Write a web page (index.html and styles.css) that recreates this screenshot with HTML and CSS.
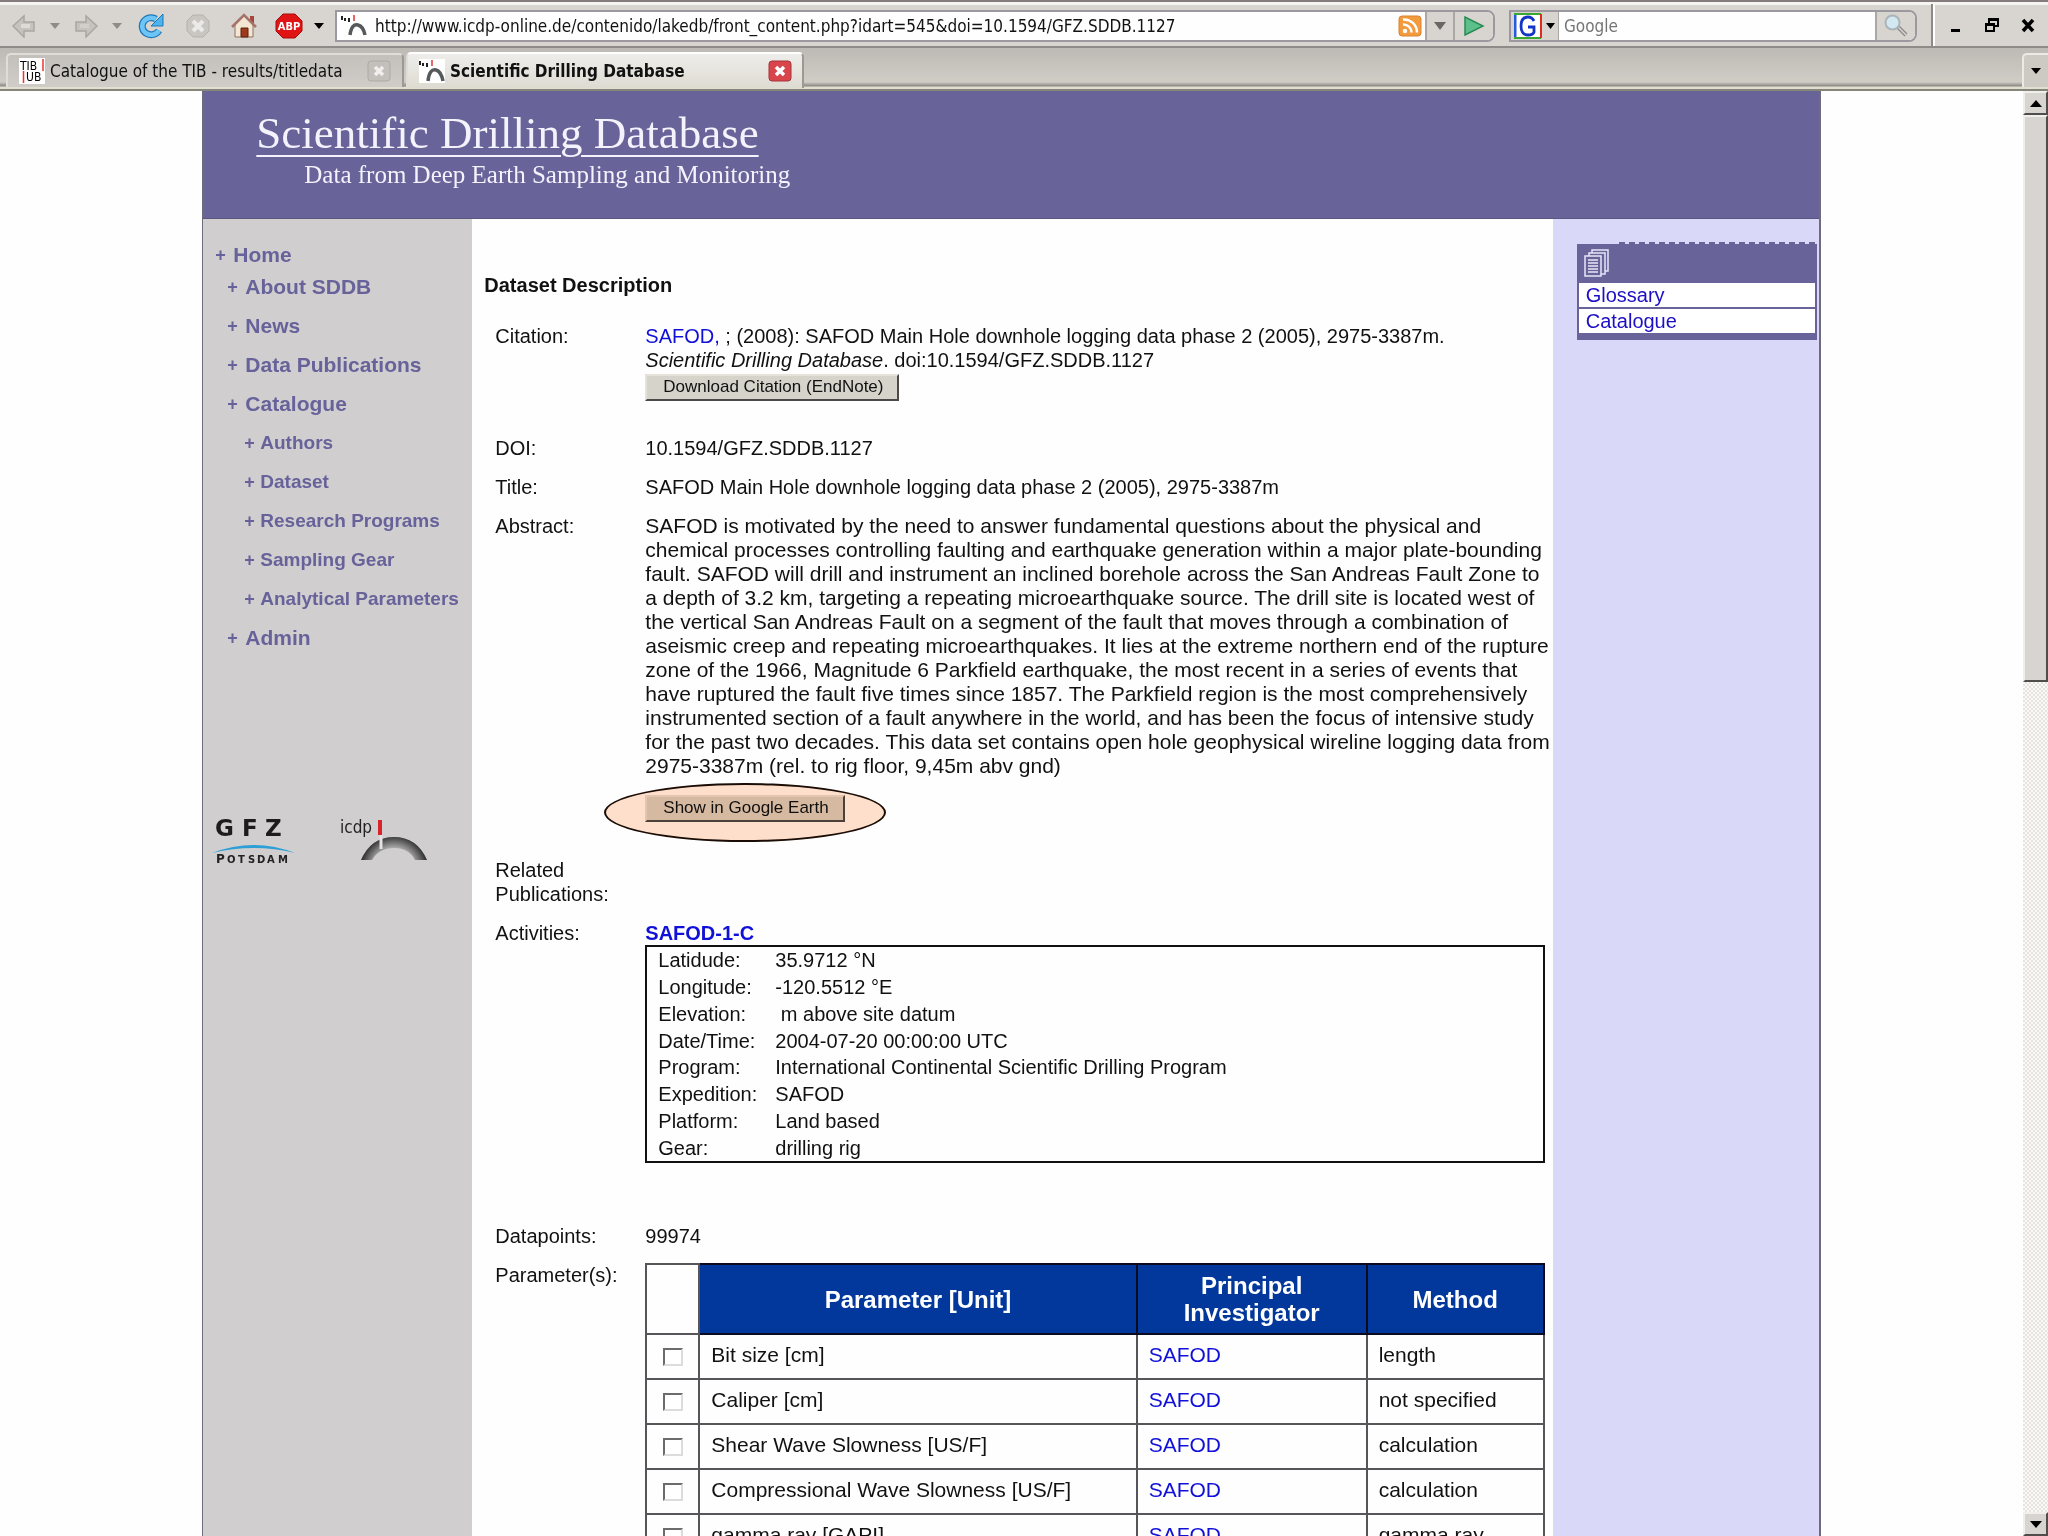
FILE: index.html
```html
<!DOCTYPE html>
<html lang="en">
<head>
<meta charset="utf-8">
<title>Scientific Drilling Database</title>
<link rel="stylesheet" href="styles.css">
</head>
<body>
<header class="toolbar">
  <div class="nav-buttons">
    <button class="icon-btn" aria-label="Back"><svg width="24" height="24" viewBox="0 0 24 24"><path d="M1 12 12 2v6h10v9H12v6z" fill="#c6c3be" stroke="#a9a6a1" stroke-width="1.5"/><path d="M9 12h9" stroke="#dedbd7" stroke-width="4"/></svg></button>
    <button class="caret-btn" aria-label="Back history"><svg width="10" height="6"><path d="M0 0h10L5 6z" fill="#8f8c88"/></svg></button>
    <button class="icon-btn" aria-label="Forward"><svg width="24" height="24" viewBox="0 0 24 24"><path d="M23 12 12 2v6H2v9h10v6z" fill="#c6c3be" stroke="#a9a6a1" stroke-width="1.5"/><path d="M6 12h9" stroke="#d2cfca" stroke-width="4"/></svg></button>
    <button class="caret-btn" aria-label="Forward history"><svg width="10" height="6"><path d="M0 0h10L5 6z" fill="#8f8c88"/></svg></button>
    <button class="icon-btn reload" aria-label="Reload"><svg width="28" height="26" viewBox="0 0 28 26"><path d="M22 17.500A9 8.500 0 1 1 19 6" fill="none" stroke="#1f78b8" stroke-width="7"/><path d="M26 1v12H14z" fill="#4db4ee" stroke="#1f78b8"/><path d="M22 17.500A9 8.500 0 1 1 19 6" fill="none" stroke="#6cc5f5" stroke-width="4.500"/></svg></button>
    <button class="icon-btn stop" aria-label="Stop"><svg width="26" height="26" viewBox="0 0 26 26"><path d="M8 2h10l6 6v10l-6 6H8l-6-6V8z" fill="#c9c6c2" stroke="#b5b2ae"/><path d="m8 8 10 10M18 8 8 18" stroke="#eceae8" stroke-width="4"/></svg></button>
    <button class="icon-btn home" aria-label="Home"><svg width="26" height="26" viewBox="0 0 26 26"><path d="M19 3h4v8h-4z" fill="#a7453f"/><path d="M4 12v12h18V12l-9-9z" fill="#f3e6d3" stroke="#8a7260"/><path d="m1 14 12-12 12 12" fill="none" stroke="#a5736a" stroke-width="2.500"/><path d="M10 15h7v9h-7z" fill="#a03a1c" stroke="#5c2312"/></svg></button>
    <button class="icon-btn abp" aria-label="Adblock Plus"><svg width="28" height="26" viewBox="0 0 28 26"><path d="M8 1h12l7 7v10l-7 7H8l-7-7V8z" fill="#e01414" stroke="#a50d0d"/><text x="14" y="17" text-anchor="middle" class="abp-text">ABP</text></svg></button>
    <button class="caret-btn" aria-label="Adblock menu"><svg width="10" height="6"><path d="M0 0h10L5 6z" fill="#000"/></svg></button>
  </div>
  <form class="address">
    <svg class="favicon" width="26" height="24" viewBox="0 0 26 24"><path d="M1 2v4M4 4v3M8 4v4" stroke="#222" stroke-width="2"/><path d="M13 1v6" stroke="#d33" stroke-width="1.500"/><path d="M9 21c1-8 4-11 8-10s6 5 7 10" fill="none" stroke="#55595a" stroke-width="3.500"/></svg>
    <input class="url" type="text" aria-label="Address" value="http://www.icdp-online.de/contenido/lakedb/front_content.php?idart=545&amp;doi=10.1594/GFZ.SDDB.1127">
    <svg class="rss" width="24" height="22" viewBox="0 0 24 22"><rect x="1" y="1" width="22" height="20" rx="3" fill="#f39a3c" stroke="#d98432"/><circle cx="7" cy="16" r="2.200" fill="#fff"/><path d="M5 9.500a8 8 0 0 1 8.500 8M5 4.500a13 13 0 0 1 14 13" fill="none" stroke="#fff" stroke-width="2.500"/></svg>
    <button type="button" class="addr-drop" aria-label="Address history"><svg width="12" height="8"><path d="M0 0h12L6 8z" fill="#6a6764"/></svg></button>
    <button type="button" class="go" aria-label="Go"><svg width="22" height="20" viewBox="0 0 22 20"><path d="M2 1v18L20 10z" fill="#5cc08a" stroke="#2b8a55" stroke-width="1.500"/></svg></button>
  </form>
  <form class="search">
    <button type="button" class="engine" aria-label="Search engine"><svg width="28" height="26" viewBox="0 0 28 26"><rect x="1" y="1" width="26" height="24" fill="#fff"/><path d="M1 25V1" stroke="#2a5ae0" stroke-width="3"/><path d="M0 1h27M0 25h27" stroke="#3aa830" stroke-width="2"/><path d="M27 1v24" stroke="#e02a1a" stroke-width="2"/><path d="M20 8q-2-4-6-4-7 0-7 9t7 9q5 0 6-3v-5h-6" fill="none" stroke="#1434c8" stroke-width="2.800"/></svg><svg width="9" height="6"><path d="M0 0h9L4.500 6z"/></svg></button>
    <input class="query" type="text" aria-label="Search" placeholder="Google">
    <button type="button" class="find" aria-label="Search"><svg width="26" height="24" viewBox="0 0 26 24"><path d="m15 13 8 8" stroke="#8d8a87" stroke-width="4"/><path d="m15 13 8 8" stroke="#d8d8d8" stroke-width="1.500"/><circle cx="9.500" cy="8.500" r="7" fill="#d3e9f2" stroke="#a9b4ba" stroke-width="2"/></svg></button>
  </form>
  <div class="window-controls">
    <button aria-label="Minimize"><svg width="16" height="16"><path d="M3 12h9v3H3z"/></svg></button>
    <button aria-label="Restore"><svg width="16" height="16"><path d="M5 6V2h9v7h-3M5 3h9" fill="none" stroke="#000" stroke-width="2"/><path d="M2 7h8v7H2zM2 8h8" fill="none" stroke="#000" stroke-width="2"/></svg></button>
    <button aria-label="Close"><svg width="16" height="16"><path d="m3 3 10 11M13 3 3 14" stroke="#000" stroke-width="3.500"/></svg></button>
  </div>
</header>
<nav class="tabs" aria-label="Tabs">
  <div class="tab">
    <svg width="26" height="26" viewBox="0 0 26 26"><rect width="26" height="26" fill="#fff"/><text x="1" y="12" class="tib-text">TIB</text><text x="7" y="23" class="tib-text">UB</text><path d="M24 1v12M4.500 13v12" stroke="#e33" stroke-width="1.500"/></svg>
    <span class="tab-title">Catalogue of the TIB - results/titledata</span>
    <button class="tab-close" aria-label="Close tab"><svg width="24" height="22" viewBox="0 0 24 22"><rect x="1" y="1" width="22" height="20" rx="3" fill="#c3c0bc" stroke="#adaaa6"/><path d="m8 7 8 8M16 7l-8 8" stroke="#f0efed" stroke-width="3.500"/></svg></button>
  </div>
  <div class="tab active">
    <svg width="26" height="24" viewBox="0 0 26 24"><rect width="26" height="24" fill="#fff"/><path d="M1 2v4M4 4v3M8 4v4" stroke="#222" stroke-width="2"/><path d="M13 1v6" stroke="#d33" stroke-width="1.500"/><path d="M9 22c1-9 4-12 8-11s6 6 7 11" fill="none" stroke="#55595a" stroke-width="3.500"/></svg>
    <span class="tab-title">Scientific Drilling Database</span>
    <button class="tab-close" aria-label="Close tab"><svg width="24" height="22" viewBox="0 0 24 22"><rect x="1" y="1" width="22" height="20" rx="3" fill="#d8464c" stroke="#a63338"/><path d="m8 7 8 8M16 7l-8 8" stroke="#fff" stroke-width="3.500"/></svg></button>
  </div>
  <button class="all-tabs" aria-label="List all tabs"><svg width="10" height="6"><path d="M0 0h10L5 6z"/></svg></button>
</nav>
<div class="viewport">
  <div class="canvas">
    <div class="page">
      <div class="banner">
        <h1>Scientific Drilling Database</h1>
        <p>Data from Deep Earth Sampling and Monitoring</p>
      </div>
      <div class="columns">
        <aside class="sidebar">
          <ul class="menu">
            <li class="top"><a href="#"><i>+</i>Home</a></li>
            <li class="main"><a href="#"><i>+</i>About SDDB</a></li>
            <li class="main"><a href="#"><i>+</i>News</a></li>
            <li class="main"><a href="#"><i>+</i>Data Publications</a></li>
            <li class="main"><a href="#"><i>+</i>Catalogue</a></li>
            <li class="sub"><a href="#"><i>+</i>Authors</a></li>
            <li class="sub"><a href="#"><i>+</i>Dataset</a></li>
            <li class="sub"><a href="#"><i>+</i>Research Programs</a></li>
            <li class="sub"><a href="#"><i>+</i>Sampling Gear</a></li>
            <li class="sub"><a href="#"><i>+</i>Analytical Parameters</a></li>
            <li class="main"><a href="#"><i>+</i>Admin</a></li>
          </ul>
          <div class="logos">
            <svg width="84" height="50" viewBox="0 0 84 50"><text x="3 30 53" y="19" class="gfz-text">GFZ</text><path d="M0 36Q42 20 83 36Q42 26 0 36z" fill="#2c9fd6"/><text y="46" class="potsdam-text"><tspan x="4">P</tspan><tspan class="small-caps" x="15 26 36 45 55 66">OTSDAM</tspan></text></svg>
            <svg width="90" height="50" viewBox="0 0 90 50"><defs><radialGradient id="arch" gradientUnits="userSpaceOnUse" cx="55" cy="52" r="35"><stop offset=".5" stop-color="#d0cece"/><stop offset=".75" stop-color="#777"/><stop offset="1" stop-color="#222"/></radialGradient></defs><text x="1" y="16" class="icdp-text">icdp</text><path d="M22 43Q32 20 55 20T88 43H76Q70 31 55 31T33 43z" fill="url(#arch)"/><path d="M42 18v14" stroke="#e4e2e2" stroke-width="3"/><path d="M41 3v15" stroke="#d8232a" stroke-width="4"/></svg>
          </div>
        </aside>
        <main class="content">
          <h2>Dataset Description</h2>
          <dl class="fields">
            <dt>Citation:</dt>
            <dd class="citation"><p><a href="#">SAFOD,</a> ; (2008): SAFOD Main Hole downhole logging data phase 2 (2005), 2975-3387m. <em>Scientific Drilling Database</em>. doi:10.1594/GFZ.SDDB.1127</p><button class="push">Download Citation (EndNote)</button></dd>
            <dt>DOI:</dt>
            <dd>10.1594/GFZ.SDDB.1127</dd>
            <dt>Title:</dt>
            <dd>SAFOD Main Hole downhole logging data phase 2 (2005), 2975-3387m</dd>
            <dt>Abstract:</dt>
            <dd class="abstract"><p>SAFOD is motivated by the need to answer fundamental questions about the physical and<br>
              chemical processes controlling faulting and earthquake generation within a major plate-bounding<br>
              fault. SAFOD will drill and instrument an inclined borehole across the San Andreas Fault Zone to<br>
              a depth of 3.2 km, targeting a repeating microearthquake source. The drill site is located west of<br>
              the vertical San Andreas Fault on a segment of the fault that moves through a combination of<br>
              aseismic creep and repeating microearthquakes. It lies at the extreme northern end of the rupture<br>
              zone of the 1966, Magnitude 6 Parkfield earthquake, the most recent in a series of events that<br>
              have ruptured the fault five times since 1857. The Parkfield region is the most comprehensively<br>
              instrumented section of a fault anywhere in the world, and has been the focus of intensive study<br>
              for the past two decades. This data set contains open hole geophysical wireline logging data from<br>
              2975-3387m (rel. to rig floor, 9,45m abv gnd)</p><div class="earth"><button class="push">Show in Google Earth</button><span class="highlight"></span></div></dd>
            <dt>Related Publications:</dt>
            <dd></dd>
            <dt>Activities:</dt>
            <dd class="activity"><a class="activity-name" href="#">SAFOD-1-C</a>
              <table class="details">
                <tr><th>Latidude:</th><td>35.9712 °N</td></tr>
                <tr><th>Longitude:</th><td>-120.5512 °E</td></tr>
                <tr><th>Elevation:</th><td>&nbsp;m above site datum</td></tr>
                <tr><th>Date/Time:</th><td>2004-07-20 00:00:00 UTC</td></tr>
                <tr><th>Program:</th><td>International Continental Scientific Drilling Program</td></tr>
                <tr><th>Expedition:</th><td>SAFOD</td></tr>
                <tr><th>Platform:</th><td>Land based</td></tr>
                <tr><th>Gear:</th><td>drilling rig</td></tr>
              </table></dd>
            <dt>Datapoints:</dt>
            <dd>99974</dd>
            <dt>Parameter(s):</dt>
            <dd>
              <table class="params">
                <thead><tr><td class="pick"></td><th>Parameter [Unit]</th><th class="pi">Principal Investigator</th><th class="method">Method</th></tr></thead>
                <tbody>
                <tr><td class="pick"><input type="checkbox" id="p1"></td><td><label for="p1">Bit size [cm]</label></td><td><a href="#">SAFOD</a></td><td>length</td></tr>
                <tr><td class="pick"><input type="checkbox" id="p2"></td><td><label for="p2">Caliper [cm]</label></td><td><a href="#">SAFOD</a></td><td>not specified</td></tr>
                <tr><td class="pick"><input type="checkbox" id="p3"></td><td><label for="p3">Shear Wave Slowness [US/F]</label></td><td><a href="#">SAFOD</a></td><td>calculation</td></tr>
                <tr><td class="pick"><input type="checkbox" id="p4"></td><td><label for="p4">Compressional Wave Slowness [US/F]</label></td><td><a href="#">SAFOD</a></td><td>calculation</td></tr>
                <tr><td class="pick"><input type="checkbox" id="p5"></td><td><label for="p5">gamma ray [GAPI]</label></td><td><a href="#">SAFOD</a></td><td>gamma ray</td></tr>
                </tbody>
              </table>
            </dd>
          </dl>
        </main>
        <aside class="extras">
          <div class="box">
            <div class="box-head"><svg width="26" height="28" viewBox="0 0 26 28"><g fill="#686398" stroke="#e8e6f8" stroke-width="1.500"><path d="M8 1h16v21H8z"/><path d="M5 4h16v21H5z"/><path d="M1 7h16v20H1z"/></g><path d="M4 11h10M4 14h10M4 17h10M4 20h10M4 23h10" stroke="#e8e6f8" stroke-width="1.500"/></svg></div>
            <a href="#">Glossary</a>
            <a href="#">Catalogue</a>
          </div>
        </aside>
      </div>
    </div>
  </div>
  <div class="scrollbar">
    <button class="scroll-btn" aria-label="Scroll up"><svg width="12" height="7"><path d="M0 7h12L6 0z"/></svg></button>
    <div class="thumb"></div>
    <div class="track"></div>
    <button class="scroll-btn" aria-label="Scroll down"><svg width="12" height="7"><path d="M0 0h12L6 7z"/></svg></button>
  </div>
</div>
</body>
</html>
```
FILE: styles.css
```css
* { box-sizing: border-box; }
body {
  margin: 0;
  height: 100vh;
  overflow: hidden;
  display: flex;
  flex-direction: column;
  background: #fefefe;
  color: #111;
  font: 20px/24px "Liberation Sans", Arial, sans-serif;
}
button { font: inherit; color: inherit; padding: 0; margin: 0; border: 0; background: none; }
p, h1, h2, ul, dl, dd { margin: 0; padding: 0; }
svg { display: block; flex: none; }
a { color: #1010d8; text-decoration: none; }

/* browser toolbar */
.toolbar {
  flex: none;
  height: 48px;
  display: flex;
  align-items: stretch;
  background: #d8d4cf;
  border-top: 2px solid #857d7d;
  border-bottom: 2px solid #8f8b88;
  box-shadow: inset 0 3px #f6f4f3;
  font: 17px/24px "DejaVu Sans Condensed", Tahoma, sans-serif;
}
.nav-buttons { width: 335px; flex: none; display: flex; align-items: center; padding: 3px 0 0 12px; }
.icon-btn { width: 24px; display: flex; justify-content: center; }
.caret-btn { width: 40px; display: flex; justify-content: center; }
.reload { width: 28px; }
.stop { width: 26px; margin-left: 20px; }
.home { width: 26px; margin-left: 20px; }
.abp { width: 28px; margin-left: 18px; }
.abp + .caret-btn { width: 34px; }
.abp-text { font: bold 11px "DejaVu Sans Condensed", sans-serif; fill: #fff; }
.address, .search {
  display: flex;
  align-items: center;
  margin: 8px 0 4px;
  border: 2px solid #9b98a0;
  border-radius: 0 8px 8px 0;
  background: #fefefe;
  overflow: hidden;
}
.address { flex: 1; margin-right: 14px; }
.favicon { margin-left: 4px; }
.url, .query { flex: 1; min-width: 0; align-self: stretch; border: 0; padding: 0 0 0 8px; font: inherit; color: #111; background: none; outline: 0; }
.rss { margin-right: 3px; }
.addr-drop, .go, .find, .engine { align-self: stretch; display: flex; align-items: center; justify-content: center; background: #d8d5d0; border-left: 2px solid #aaa7a5; }
.addr-drop { width: 28px; }
.go { width: 40px; }
.search { width: 408px; flex: none; }
.engine { width: 48px; gap: 4px; border-left: 0; border-right: 1px solid #aaa7a5; }
.query { padding-left: 5px; }
.query::placeholder { color: #757575; opacity: 1; }
.find { width: 40px; }
.window-controls { display: flex; align-items: center; gap: 20px; margin: 2px 0 0 14px; padding: 0 12px 0 15px; border-left: 2px solid #8d8984; box-shadow: inset 2px 0 #fff; }

/* tab strip */
.tabs {
  flex: none;
  height: 43px;
  display: flex;
  align-items: flex-end;
  gap: 2px;
  padding: 4px 0 4px 6px;
  background: linear-gradient(#bdbab5, #d0cdc7 34px, #8b8984 38px, #e0dfd2 39px, #e0dfd2 41px, #858678 41px);
  font: 17px/24px "DejaVu Sans Condensed", Tahoma, sans-serif;
}
.tab { width: 398px; height: 34px; display: flex; align-items: center; gap: 5px; padding: 0 11px; border: 2px solid #e0ddd9; border-right-color: #9c9995; border-bottom: 0; border-radius: 5px 5px 0 0; background: linear-gradient(#c3c0bb, #d0cdc8); }
.tab.active { height: 36px; align-self: stretch; padding-right: 10px; background: linear-gradient(#efedea, #dedbd2); border-top-color: #fff; }
.tab-title { flex: 1; white-space: nowrap; }
.active .tab-title { font-weight: bold; }
.tib-text { font: 12px "DejaVu Sans Condensed", sans-serif; }
.all-tabs { width: 26px; height: 34px; margin-left: auto; display: flex; align-items: center; justify-content: center; border-left: 2px solid #eceae6; border-top: 2px solid #eceae6; border-radius: 5px 0 0 0; background: #cdcac4; }

/* page viewport */
.viewport { flex: 1; min-height: 0; display: flex; }
.canvas { flex: 1; min-width: 0; overflow: hidden; }
.page { width: 80%; margin: 0 auto; border: solid #6d6b7c; border-width: 0 2px 0 1px; }
.banner { height: 128px; padding: 18px 53px; background: #686398; border-bottom: 1px solid #5b567f; color: #f4f2fc; font-family: "Liberation Serif", "Palatino Linotype", serif; }
.banner h1 { font-size: 45px; line-height: 48px; font-weight: normal; text-decoration: underline; text-decoration-thickness: 2px; text-underline-offset: 7px; }
.banner p { margin-top: 4px; padding-left: 48px; font-size: 25px; line-height: 28px; }
.columns { display: grid; grid-template-columns: 269px minmax(0, 1fr) 266px; min-height: 1400px; }

/* left menu */
.sidebar { background: #d0cecf; padding: 24px 0 0 12px; }
.menu { list-style: none; font-weight: bold; }
.menu a { display: flex; align-items: center; color: #67629a; }
.menu i { font-style: normal; font-size: 18px; width: 18px; }
.menu .top { height: 32px; font-size: 21px; }
.menu .main { height: 39px; padding-left: 12px; font-size: 21px; }
.menu .sub { height: 39px; padding-left: 29px; font-size: 19px; white-space: nowrap; }
.menu .sub i { width: 16px; }
.logos { display: flex; gap: 43px; margin: 152px 0 0 -3px; }
.gfz-text { font: bold 23px "DejaVu Sans", sans-serif; fill: #1c1c1c; }
.potsdam-text { font: bold 12px "DejaVu Sans", sans-serif; fill: #222; }
.small-caps { font-size: 10px; }
.icdp-text { font: 17px "DejaVu Sans Condensed", sans-serif; fill: #222; }

/* main column */
.content { padding: 54px 8px 0 12px; background: #fefefe; }
.content h2 { font-size: 20px; line-height: 24px; }
.fields { display: grid; grid-template-columns: 150px minmax(0, 1fr); row-gap: 15px; padding: 27px 0 0 11px; }
.fields dt { max-width: 130px; }
.citation { padding-bottom: 20px; }
.citation p { max-width: 840px; margin-bottom: 2px; }
.push {
  height: 27px;
  padding: 0 14px 2px 16px;
  font-size: 17px;
  line-height: 22px;
  background: #d5d3ca;
  border: 2px solid;
  border-color: #e4e2da #4c4a48 #4c4a48 #e4e2da;
}
.citation .push, .earth .push { display: block; }
.abstract { padding-bottom: 21px; }
.abstract p { white-space: nowrap; font-size: 21px; }
.earth { position: relative; display: inline-block; margin-top: 17px; vertical-align: top; }
.highlight { position: absolute; left: -41px; right: -41px; top: -12px; bottom: -20px; border: 2px solid #1b0d05; border-radius: 50%; background: #ffe0cc; mix-blend-mode: multiply; pointer-events: none; }
.activity { padding-bottom: 46px; }
.activity-name { display: block; font-weight: bold; }
.details { width: 100%; border: 2px solid #111; border-collapse: separate; border-spacing: 0; height: 218px; }
.details th { width: 128px; padding: 0 0 0 11px; text-align: left; font-weight: normal; }
.details td { padding: 0; }
.params { width: 100%; border-collapse: collapse; table-layout: fixed; font-size: 21px; }
.params th, .params td { height: 45px; padding: 0 11px 3px; border: 2px solid #55555a; }
.params thead th { height: 70px; padding-bottom: 0; background: #02389c; color: #fff; font-size: 24px; line-height: 27px; border-color: #0a0a20; }
.params .pick { width: 53px; padding: 0; text-align: center; }
.pi { width: 230px; }
.method { width: 177px; }
.params input { appearance: none; display: block; width: 20px; height: 18px; margin: 0 auto; border: 2px solid; border-color: #6b6b6b #dcdcdc #dcdcdc #6b6b6b; background: #fff; }

/* right column */
.extras { background: #dad8f9; padding: 25px 2px 0 24px; }
.box { display: grid; gap: 2px; padding: 0 2px 7px; background: #686398; }
.box-head { height: 37px; padding: 5px; position: relative; }
.box-head::before { content: ""; position: absolute; left: 40px; right: 0; top: -2px; border-top: 2px dashed #686398; }
.box a { height: 24px; padding-left: 7px; background: #fff; color: #1c0ec4; }

/* scrollbar */
.scrollbar { width: 25px; flex: none; display: flex; flex-direction: column; }
.scroll-btn, .thumb { border: 2px solid; border-color: #f1efec #504e4c #504e4c #f1efec; background: #d8d4cf; }
.scroll-btn { height: 24px; display: flex; align-items: center; justify-content: center; flex: none; }
.thumb { flex: 565; }
.track { flex: 832; background: repeating-conic-gradient(#e6e2de 0 25%, #fbfaf9 0 50%) 0 0 / 4px 4px; }
```
